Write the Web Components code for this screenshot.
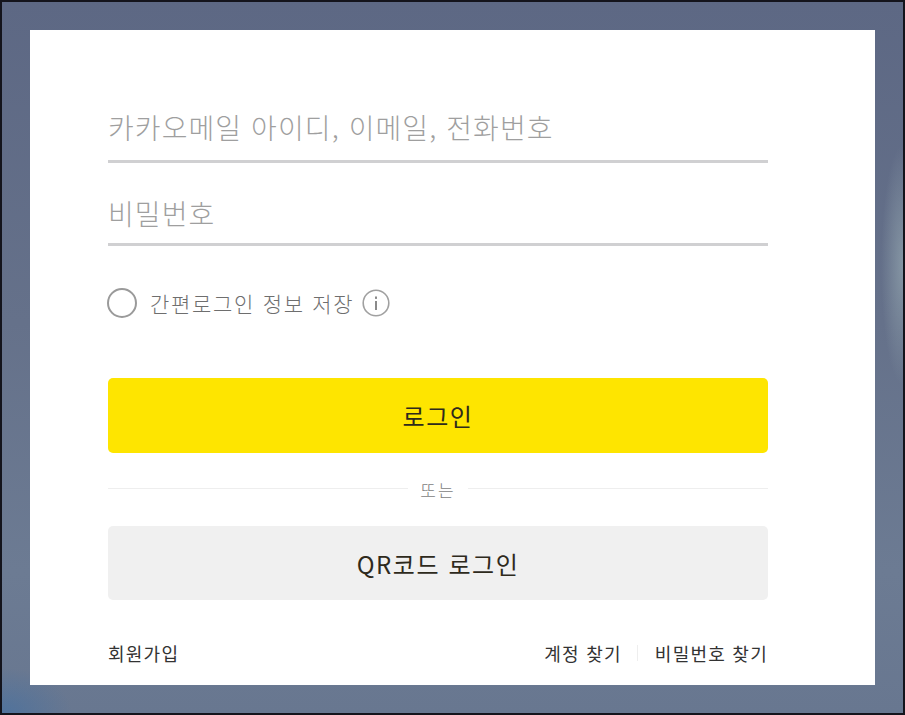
<!DOCTYPE html>
<html lang="ko"><head><meta charset="utf-8">
<style>
html,body{margin:0;padding:0;height:100%}
body{font-family:"Noto Sans CJK KR","Noto Sans",sans-serif}
</style></head><body>
<login-backdrop>
  <login-card>
    <text-field style="height:133px;--pb:13px" text="카카오메일 아이디, 이메일, 전화번호"></text-field>
    <text-field style="height:83px;--pb:10px" text="비밀번호"></text-field>
    <save-option></save-option>
    <action-button kind="primary" style="margin-top:59px">로그인</action-button>
    <or-divider></or-divider>
    <action-button kind="secondary" style="height:74px">QR코드 로그인</action-button>
    <link-row></link-row>
  </login-card>
</login-backdrop>
<script>
function def(name,html){
  customElements.define(name,class extends HTMLElement{
    connectedCallback(){
      if(this.shadowRoot)return;
      const r=this.attachShadow({mode:"open"});
      r.innerHTML=typeof html==="function"?html(this):html;
    }
  });
}
def("login-backdrop",`<style>
:host{display:block;box-sizing:border-box;width:905px;height:715px;padding:28px;
border:2px solid #14141c;
background:
radial-gradient(ellipse 22px 120px at 100% 37%,rgba(160,180,185,.55),rgba(160,180,185,0) 100%),
radial-gradient(ellipse 70px 45px at 0% 100%,rgba(60,110,165,.55),rgba(60,110,165,0) 100%),
linear-gradient(180deg,#5d6884 0%,#65718a 45%,#6c7b93 80%,#687790 100%);}
</style><slot></slot>`);
def("login-card",`<style>
:host{display:block;box-sizing:border-box;width:845px;height:655px;background:#fff;padding:0 107px 0 78px}
</style><slot></slot>`);
def("text-field",el=>`<style>
:host{display:flex;align-items:flex-end;box-sizing:border-box;border-bottom:3px solid #d0d0d2}
span{display:block;color:#9f9f9f;font-size:28px;font-weight:300;line-height:40px;letter-spacing:1.08px;padding-bottom:var(--pb);white-space:nowrap}
</style><span>${el.getAttribute("text")}</span>`);
def("save-option",`<style>
:host{display:flex;align-items:center;margin-top:41px;height:32px;color:#6e6e6e;font-size:21px;font-weight:300;letter-spacing:1.7px;margin-left:-1px}
.radio{box-sizing:border-box;width:30px;height:30px;border:2px solid #9a9a9a;border-radius:50%;margin-right:13px;flex:none}
svg{display:block;margin-left:8px;flex:none}
span{white-space:nowrap}
</style><div class="radio"></div><span>간편로그인 정보 저장</span>
<svg width="28" height="28" viewBox="0 0 28 28" fill="none"><circle cx="14" cy="14" r="12.8" stroke="#a0a0a0" stroke-width="1.6"/><rect x="13" y="12" width="2" height="9" fill="#8a8a8a"/><rect x="13" y="7.5" width="2" height="2.4" fill="#8a8a8a"/></svg>`);
def("action-button",el=>{
  const p=el.getAttribute("kind")==="primary";
  return `<style>
:host{display:flex;align-items:center;justify-content:center;height:75px;border-radius:5px;background:${p?"#fee500":"#f0f0f0"};color:#2e2a1c;font-size:24px;font-weight:400;letter-spacing:1.55px}
</style><slot></slot>`});
def("or-divider",`<style>
:host{display:flex;align-items:center;height:73px;color:#7d7d7d;font-size:17px;font-weight:300;letter-spacing:2px;gap:12px}
i{flex:1;height:1px;background:#eeeeee;margin-bottom:2px}
span{line-height:20px}
</style><i></i><span>또는</span><i></i>`);
def("link-row",`<style>
:host{display:flex;align-items:center;justify-content:space-between;margin-top:36px;height:34px;color:#333;font-size:18px;letter-spacing:1.25px}
div{display:flex;align-items:center}
i{width:1px;height:16px;background:#eeeeee;margin:0 17px 0 15px}
</style><span>회원가입</span><div><span>계정 찾기</span><i></i><span>비밀번호 찾기</span></div>`);
</script>
</body></html>
